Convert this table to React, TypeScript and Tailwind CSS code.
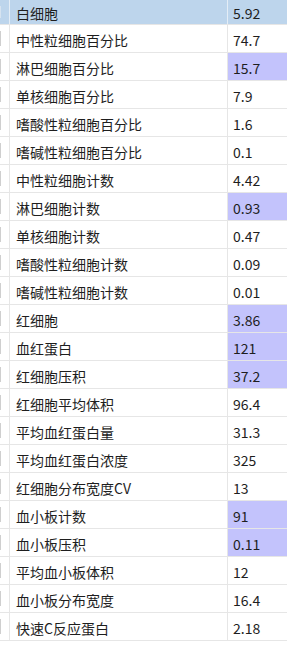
const rows: { name: string; value: string; hl?: boolean }[] = [
  { name: "白细胞", value: "5.92" },
  { name: "中性粒细胞百分比", value: "74.7" },
  { name: "淋巴细胞百分比", value: "15.7", hl: true },
  { name: "单核细胞百分比", value: "7.9" },
  { name: "嗜酸性粒细胞百分比", value: "1.6" },
  { name: "嗜碱性粒细胞百分比", value: "0.1" },
  { name: "中性粒细胞计数", value: "4.42" },
  { name: "淋巴细胞计数", value: "0.93", hl: true },
  { name: "单核细胞计数", value: "0.47" },
  { name: "嗜酸性粒细胞计数", value: "0.09" },
  { name: "嗜碱性粒细胞计数", value: "0.01" },
  { name: "红细胞", value: "3.86", hl: true },
  { name: "血红蛋白", value: "121", hl: true },
  { name: "红细胞压积", value: "37.2", hl: true },
  { name: "红细胞平均体积", value: "96.4" },
  { name: "平均血红蛋白量", value: "31.3" },
  { name: "平均血红蛋白浓度", value: "325" },
  { name: "红细胞分布宽度CV", value: "13" },
  { name: "血小板计数", value: "91", hl: true },
  { name: "血小板压积", value: "0.11", hl: true },
  { name: "平均血小板体积", value: "12" },
  { name: "血小板分布宽度", value: "16.4" },
  { name: "快速C反应蛋白", value: "2.18" },
];

export default function App() {
  return (
    <div
      className="w-[287px] h-[654px] overflow-hidden bg-white text-[14px] text-[#1e1e1e]"
      style={{ fontFamily: '"Noto Sans CJK SC", "Noto Sans", sans-serif' }}
    >
      {rows.map((r, i) => {
        const head = i === 0;
        const rowBg = head ? "bg-[#bdd5ec]" : "bg-white";
        const line = head ? "border-[#e4edf6]" : "border-[#e6e6e6]";
        return (
          <div
            key={r.name}
            className={`flex border-b border-[#e6e6e6] ${head ? "h-[25px]" : "h-[28px]"} ${rowBg}`}
          >
            <div className={`w-[10px] shrink-0 border-r ${line} flex items-center`}>
              <div className={`w-px ${head ? "h-[12px] bg-[#d6e3f0]" : "h-[15px] bg-[#cfcfcf]"}`} />
            </div>
            <div className={`w-[218px] shrink-0 border-r ${line} pl-[6px] flex items-center leading-none pt-[2px]`}>
              {r.name}
            </div>
            <div
              className={`flex-1 pl-[5px] flex items-center leading-none pt-[2px] ${
                r.hl ? "bg-[#c3c3fc]" : ""
              }`}
            >
              {r.value}
            </div>
          </div>
        );
      })}
    </div>
  );
}
